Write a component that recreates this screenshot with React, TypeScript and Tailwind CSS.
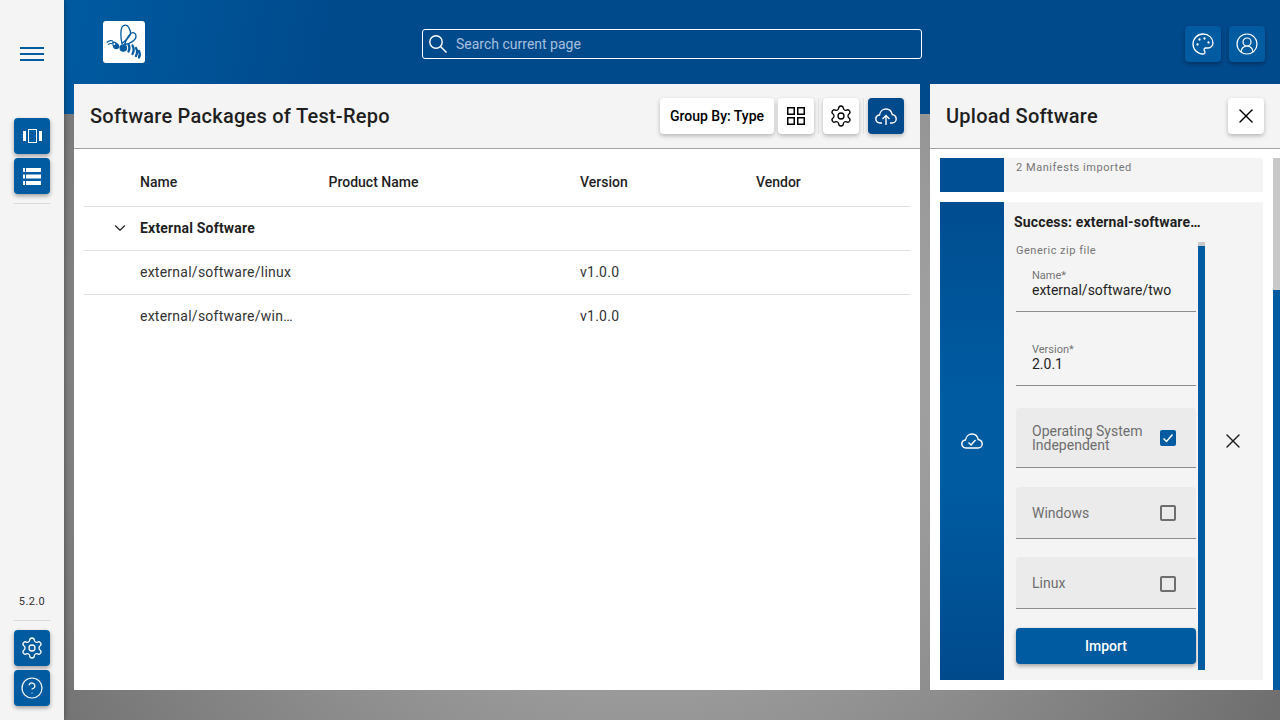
import React from 'react';
import { ChevronDown, CircleHelp, CircleUserRound, Palette, Settings, X } from 'lucide-react';

const BeeLogo = () => (
  <svg viewBox="0 0 42 42" className="w-[42px] h-[42px]" fill="none">
    {/* wings */}
    <path d="M19 22.5 C17.5 17 17.5 9 19 6 C20.5 3.5 24 3.5 25.5 6 C27 8.5 28 10 27.5 13 C26.5 16.5 22 20 19 22.5 Z" stroke="#005ba1" strokeWidth="1.3" />
    <path d="M21.5 23.5 C23 19 26 14 28.5 12 C31 11 33 12.5 33 15.5 C33 19 27 23 21.5 23.5 Z" stroke="#005ba1" strokeWidth="1.3" />
    {/* body and head */}
    <circle cx="20.3" cy="27" r="3.8" fill="#005ba1" />
    <path d="M9 20.5 C12.5 20 16 22.5 16.5 25.5 C16.5 28 13 29 11 27.5 C9.5 26.5 9.5 23 9 20.5 Z" fill="#005ba1" />
    <circle cx="11.3" cy="23" r="1" fill="white" />
    <path d="M3.7 21.5 C5.5 19.8 8 19.3 10 20 M5 23.5 C6.5 22.3 8 22.2 9.5 22.8" stroke="#005ba1" strokeWidth="1.1" />
    {/* stripes */}
    <path d="M25.5 23.5 C26.6 25.5 26.6 28.5 25.5 30.5 M29.5 24.5 C31 27 31 30 29.5 33 M33 27 C34.5 29.5 34.5 32 33 35 M36 30 C37 32 37 34.5 36 36.5" stroke="#005ba1" strokeWidth="2.3" strokeLinecap="round" />
  </svg>
);

const SearchIcon = () => (
  <svg viewBox="0 0 18 18" className="w-[18px] h-[18px]" fill="none" stroke="white" strokeWidth="1.4">
    <circle cx="7" cy="7" r="6.2" />
    <path d="M11.5 11.5 L17.5 17.5" />
  </svg>
);

const CarouselIcon = () => (
  <svg viewBox="0 0 19 14" className="w-[19px] h-[14px]" fill="white">
    <rect x="0" y="2" width="3" height="10" />
    <rect x="16" y="2" width="3" height="10" />
    <path d="M5 0h9v14H5z M6 1v12h7V1z" fillRule="evenodd" />
  </svg>
);

const ServerIcon = () => (
  <svg viewBox="0 0 18 17" className="w-[18px] h-[17px]" fill="white">
    <path d="M0 0h2v4H0z M3 0h15v4H3z" />
    <path d="M0 6.5h2v4H0z M3 6.5h15v4H3z" />
    <path d="M0 13h2v4H0z M3 13h15v4H3z" />
  </svg>
);

const CloudCheckIcon = () => (
  <svg viewBox="0 0 22 16" className="w-[22px] h-4" fill="none" stroke="white" strokeWidth="1.4">
    <path d="M5 15 C2.5 15 0.8 13.3 0.8 11 C0.8 8.8 2.4 7.3 4.5 7 C5 3.5 7.8 1 11 1 C14.2 1 16.5 3.2 17.2 6.5 C19.5 7 21.2 8.8 21.2 11 C21.2 13.3 19.3 15 17 15 Z" />
    <path d="M7.5 9.5 L10 12 L14.5 7" />
  </svg>
);

const CloudUpIcon = () => (
  <svg viewBox="0 0 22 17" className="w-[22px] h-[17px]" fill="none" stroke="white" strokeWidth="1.4">
    <path d="M7 15 H5 C2.5 15 0.8 13.3 0.8 11 C0.8 8.8 2.4 7.3 4.5 7 C5 3.5 7.8 1 11 1 C14.2 1 16.5 3.2 17.2 6.5 C19.5 7 21.2 8.8 21.2 11 C21.2 13.3 19.3 15 17 15 H15" />
    <path d="M11 17 V7.5 M7.5 11 L11 7.5 L14.5 11" />
  </svg>
);

const GridIcon = () => (
  <svg viewBox="0 0 18 18" className="w-[18px] h-[18px]" fill="none" stroke="black" strokeWidth="1.5">
    <rect x="0.75" y="0.75" width="6.5" height="6.5" />
    <rect x="10.75" y="0.75" width="6.5" height="6.5" />
    <rect x="0.75" y="10.75" width="6.5" height="6.5" />
    <rect x="10.75" y="10.75" width="6.5" height="6.5" />
  </svg>
);

const SideButton = ({ children }: { children: React.ReactNode }) => (
  <button className="w-9 h-9 rounded bg-[#005ba1] text-white flex items-center justify-center shadow-[0_2px_4px_rgba(0,0,0,0.35)]">
    {children}
  </button>
);

const ToolButton = ({ children, className }: { children: React.ReactNode; className?: string }) => (
  <button className={`h-9 rounded bg-white text-black flex items-center justify-center shadow-[0_2px_4px_rgba(0,0,0,0.25)] ${className ?? 'w-9'}`}>
    {children}
  </button>
);

const TextField = ({ label, value, className }: { label: string; value: string; className: string }) => (
  <div className={`h-[54px] pl-4 border-b border-[#8c8c8c] ${className}`}>
    <div className="text-[11px] leading-[13px] text-[#757575] pt-[11px] box-content">{label}</div>
    <div className="text-sm leading-[17px] text-[#1f1f1f]">{value}</div>
  </div>
);

const CheckField = ({ label, checked, boxClass, className }: { label: string; checked?: boolean; boxClass?: string; className: string }) => (
  <div className={`rounded-t bg-[#ebebeb] border-b border-[#8c8c8c] pl-4 pr-5 flex items-center justify-between ${className}`}>
    <span className="text-sm leading-[14px] text-[#6e6e6e]">{label}</span>
    {checked ? (
      <span className="w-4 h-4 shrink-0 rounded-xs bg-[#005ba1] flex items-center justify-center">
        <svg viewBox="0 0 16 16" className="w-4 h-4" fill="none" stroke="white" strokeWidth="1.5">
          <path d="M3.5 8.5 L6.5 11.5 L12.5 4.5" />
        </svg>
      </span>
    ) : (
      <span className={`w-4 h-4 shrink-0 rounded-xs border-2 border-[#6e6e6e] ${boxClass ?? ''}`} />
    )}
  </div>
);

const rows = [
  { name: 'external/software/linux', version: 'v1.0.0' },
  { name: 'external/software/win…', version: 'v1.0.0' },
];

export default function App() {
  return (
    <div className="w-[1280px] h-[720px] flex overflow-hidden font-['Roboto',sans-serif] text-[#1f1f1f] bg-[radial-gradient(circle_at_50%_50%,#bebebe_0%,#6e6e6e_100%)]">
      <aside className="w-16 shrink-0 h-full bg-[#f4f4f4] flex flex-col items-center shadow-[0_0_6px_rgba(0,0,0,0.4)] z-10">
        <div className="mt-[47px] flex flex-col gap-1">
          <div className="w-6 h-0.5 bg-[#005ba1]" />
          <div className="w-6 h-0.5 bg-[#005ba1]" />
          <div className="w-6 h-0.5 bg-[#005ba1]" />
        </div>
        <div className="mt-[57px] flex flex-col gap-1">
          <SideButton><CarouselIcon /></SideButton>
          <SideButton><ServerIcon /></SideButton>
        </div>
        <div className="w-9 h-px bg-[#d9d9d9] mt-[9px]" />
        <div className="mt-auto text-[11px] leading-4 tracking-[0.4px] text-[#333]">5.2.0</div>
        <div className="w-9 h-px bg-[#d9d9d9] mt-[10px] mb-[9px]" />
        <div className="flex flex-col gap-1 mb-[14px]">
          <SideButton><Settings size={24} strokeWidth={1.3} /></SideButton>
          <SideButton><CircleHelp size={24} strokeWidth={1.2} /></SideButton>
        </div>
      </aside>

      <div className="flex-1 min-w-0 flex flex-col">
        <header className="h-[114px] shrink-0 bg-[linear-gradient(100deg,#005ba1_0%,#004a8c_22%,#004a8c_100%)]">
          <div className="h-[88px] flex items-center pl-[39px] pr-[15px]">
            <div className="w-[42px] h-[42px] self-start mt-[21px] bg-white rounded-[3px]">
              <BeeLogo />
            </div>
            <div className="ml-[277px] w-[500px] h-[30px] border border-white rounded-[3px] flex items-center pl-[6px]">
              <SearchIcon />
              <span className="ml-[9px] text-sm text-[#a5c0de]">Search current page</span>
            </div>
            <div className="ml-auto flex gap-2">
              <SideButton><Palette size={24} strokeWidth={1.3} /></SideButton>
              <SideButton><CircleUserRound size={24} strokeWidth={1.2} /></SideButton>
            </div>
          </div>
        </header>

        <div className="h-[606px] -mt-[30px] flex gap-[10px] pl-[10px]">
          <section className="w-[846px] bg-white flex flex-col">
            <div className="h-[65px] shrink-0 bg-[#f4f4f4] border-b border-[#a3a3a3] flex items-center pl-4 pr-4">
              <h1 className="text-xl font-medium tracking-[0.25px]">Software Packages of Test-Repo</h1>
              <div className="ml-auto flex items-center">
                <ToolButton className="w-[114px] text-sm font-medium">Group By: Type</ToolButton>
                <ToolButton className="w-9 ml-1"><GridIcon /></ToolButton>
                <div className="w-px h-9 bg-[#e0e0e0] mx-1" />
                <ToolButton><Settings size={24} strokeWidth={1.3} /></ToolButton>
                <div className="w-px h-9 bg-[#e0e0e0] mx-1" />
                <button className="w-9 h-9 rounded bg-[#004a8c] text-white flex items-center justify-center shadow-[0_2px_4px_rgba(0,0,0,0.25)]">
                  <CloudUpIcon />
                </button>
              </div>
            </div>

            <div className="mx-[10px] mt-[9px] text-sm">
              <div className="h-[49px] pb-px grid grid-cols-[56px_188.5px_251.5px_176px_1fr] items-center border-b border-[#e0e0e0] font-medium">
                <span />
                <span>Name</span>
                <span>Product Name</span>
                <span>Version</span>
                <span>Vendor</span>
              </div>
              <div className="h-[44px] pb-[2px] flex items-center border-b border-[#e0e0e0] font-bold tracking-[0.2px]">
                <ChevronDown size={18} strokeWidth={1.5} className="ml-[27px] mr-[11px]" />
                External Software
              </div>
              {rows.map((row, i) => (
                <div key={row.name} className={`h-[44px] pb-[2px] grid grid-cols-[56px_188.5px_251.5px_176px_1fr] items-center tracking-[0.25px] text-[#333] ${i === 0 ? 'border-b border-[#e0e0e0]' : ''}`}>
                  <span />
                  <span>{row.name}</span>
                  <span />
                  <span>{row.version}</span>
                  <span />
                </div>
              ))}
            </div>
          </section>

          <section className="flex-1 min-w-0 bg-white flex flex-col">
            <div className="h-[65px] shrink-0 bg-[#f4f4f4] border-b border-[#a3a3a3] flex items-center pl-4 pr-4">
              <h2 className="text-xl font-medium tracking-[0.25px]">Upload Software</h2>
              <ToolButton className="w-9 ml-auto"><X size={24} strokeWidth={1.4} /></ToolButton>
            </div>

            <div className="flex-1 min-h-0 flex pt-[9px] pl-[10px]">
              <div className="w-[323px] flex flex-col gap-[10px] pb-[10px]">
                <div className="h-[34px] flex bg-[#f4f4f4]">
                  <div className="w-16 bg-[#004f94]" />
                  <div className="pl-3 pt-[2px] text-[11px] leading-4 tracking-[0.55px] text-[#757575]">2 Manifests imported</div>
                </div>

                <div className="flex-1 min-h-0 flex bg-[#f4f4f4]">
                  <div className="w-16 shrink-0 flex items-center justify-center bg-[linear-gradient(180deg,#004d90_0%,#005ba1_40%,#005ba1_60%,#004a8c_100%)]">
                    <CloudCheckIcon />
                  </div>
                  <div className="flex-1 min-w-0 flex flex-col pb-[10px]">
                    <div className="h-[40px] shrink-0 pl-[10px] flex items-center text-sm font-bold tracking-[0.15px]">Success: external-software…</div>
                    <div className="flex-1 min-h-0 flex">
                      <div className="w-[194px] pl-3 pr-[2px] flex flex-col">
                        <div className="text-[11px] leading-4 pt-px tracking-[0.5px] text-[#757575] h-4">Generic zip file</div>
                        <TextField label="Name*" value="external/software/two" className="box-border" />
                        <TextField label="Version*" value="2.0.1" className="mt-5" />
                        <CheckField label="Operating System Independent" checked className="h-[60px] mt-[22px]" />
                        <CheckField label="Windows" className="h-[52px] mt-[19px]" />
                        <CheckField label="Linux" boxClass="mt-[2px]" className="h-[52px] mt-[18px]" />
                        <button className="h-9 mt-[19px] shrink-0 rounded bg-[#005ba1] text-white text-sm font-medium shadow-[0_2px_4px_rgba(0,0,0,0.35)]">Import</button>
                      </div>
                      <div className="w-[7px] flex flex-col">
                        <div className="h-1 bg-[#c8c8c8]" />
                        <div className="flex-1 bg-[#005ba1]" />
                      </div>
                      <div className="flex-1 flex items-center justify-center -mt-[30px] pr-[2px]">
                        <X size={24} strokeWidth={1.4} />
                      </div>
                    </div>
                  </div>
                </div>
              </div>

              <div className="w-[7px] ml-[10px] flex flex-col">
                <div className="h-[132px] bg-[#c8c8c8]" />
                <div className="flex-1 bg-[#005ba1]" />
              </div>
            </div>
          </section>
        </div>
      </div>
    </div>
  );
}
